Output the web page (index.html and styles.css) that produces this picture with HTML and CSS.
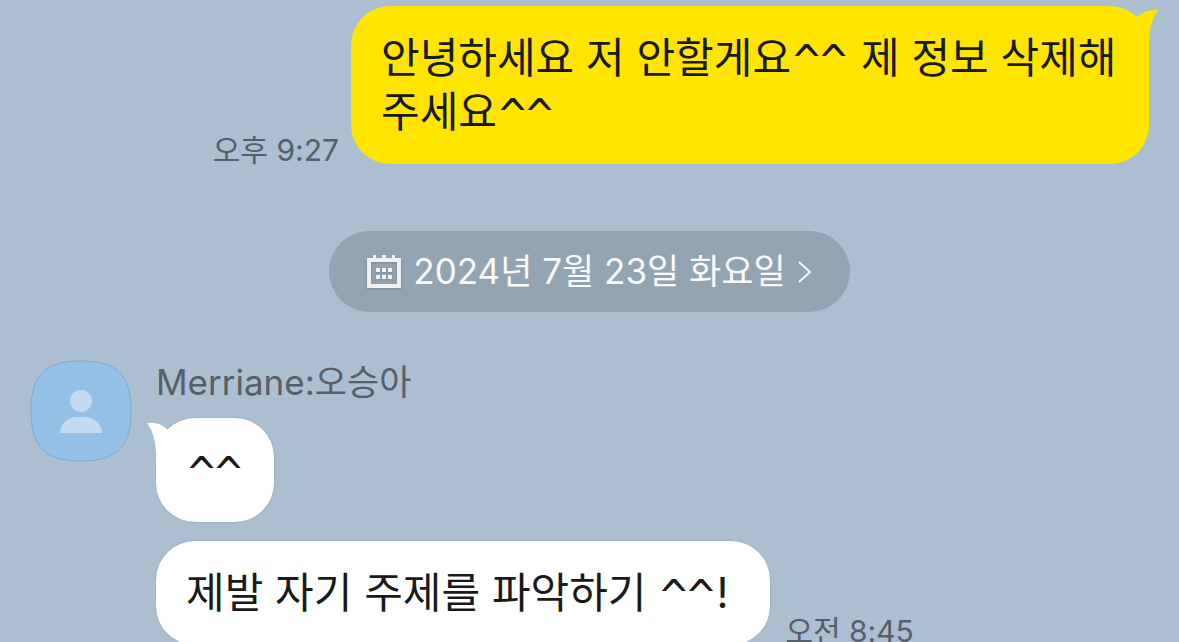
FILE: index.html
```html
<!DOCTYPE html>
<html lang="ko">
<head>
    <meta charset="UTF-8">
    <meta name="viewport" content="width=device-width, initial-scale=1.0">
    <title>채팅</title>
    <link rel="stylesheet" href="styles.css">
</head>
<body>
    <main class="chat">
        <div class="row mine">
            <time class="time">오후 9:27</time>
            <div class="bubble">
                안녕하세요 저 안할게요<span class="caret">^^</span> 제 정보 삭제해주세요<span class="caret">^^</span>
                <svg class="tail" viewBox="0 0 24 36" aria-hidden="true">
                    <path d="M0 14 L3 10 Q11 2 24 3 Q15 16 15 36 L0 36 Z"/>
                </svg>
            </div>
        </div>

        <button class="date" type="button">
            <svg class="calendar" viewBox="0 0 34 34" aria-hidden="true">
                <path fill-rule="evenodd" d="M0 3h6V0h3v3h6V0h4v3h6V0h3v3h6v30H0zM4 7v22h26V7z"/>
                <path d="M9 13h4v4H9zM15 13h4v4h-4zM21 13h4v4h-4zM9 20h4v4H9zM15 20h4v4h-4zM21 20h4v4h-4z"/>
            </svg>
            <span class="date-text">2024년 7월 23일 화요일</span>
            <svg class="arrow" viewBox="0 0 14 22" aria-hidden="true">
                <path d="M1 1L12 11L1 21"/>
            </svg>
        </button>

        <div class="group">
            <svg class="avatar" viewBox="0 0 102 102" aria-hidden="true">
                <path class="avatar-bg" d="M51 1C87 1 101 15 101 51S87 101 51 101S1 87 1 51S15 1 51 1Z"/>
                <circle cx="51" cy="41" r="11"/>
                <path d="M30 73C30 64 38 57 47 57h8C64 57 72 64 72 73Z"/>
            </svg>
            <div class="messages">
                <div class="name">Merriane:오승아</div>
                <div class="row">
                    <div class="bubble">
                        <span class="caret">^^</span>
                        <svg class="tail" viewBox="0 0 24 36" aria-hidden="true">
                            <path d="M24 14 L21 11 Q12 2 0 4 Q9 16 9 36 L24 36 Z"/>
                        </svg>
                    </div>
                </div>
                <div class="row">
                    <div class="bubble">제발 자기 주제를 파악하기 <span class="caret">^^</span>!&nbsp;</div>
                    <time class="time">오전 8:45</time>
                </div>
            </div>
        </div>
    </main>
</body>
</html>
```

FILE: styles.css
```css
body {
    margin: 0;
    height: 100vh;
    overflow: hidden;
    background-color: #abbfd0;
    font-family: Inter, "Noto Sans CJK KR", sans-serif;
}

.chat {
    display: flex;
    flex-direction: column;
    padding: 6px 30px 0;
}

.row {
    display: flex;
    align-items: flex-end;
    gap: 15px;
}

.mine {
    justify-content: flex-end;
    gap: 12px;
}

.bubble {
    position: relative;
    box-sizing: border-box;
    max-width: 798px;
    padding: 25px 30px;
    border-radius: 39px;
    background-color: #ffffff;
    box-shadow: 0 0 2px rgba(60, 90, 120, 0.3);
    color: #1a1a1a;
    font-size: 42px;
    line-height: 54px;
    word-break: break-all;
}

.mine .bubble {
    background-color: #ffe500;
    box-shadow: none;
}

/* 넓은 ^^ 모양 */
.caret {
    padding: 0 2px;
    font-family: "DejaVu Sans Mono", monospace;
    font-size: 45px;
    line-height: 1px;
    vertical-align: -3px;
}

/* 말풍선 꼬리 */
.tail {
    position: absolute;
    top: 1px;
    left: -9px;
    width: 24px;
    height: 36px;
    fill: #ffffff;
}

.mine .tail {
    left: auto;
    right: -9px;
    fill: #ffe500;
}

.time {
    color: #556068;
    font-size: 30px;
    line-height: 28px;
    white-space: nowrap;
}

.date {
    display: flex;
    align-items: center;
    align-self: center;
    gap: 12px;
    height: 81px;
    margin: 67px 0 48px;
    padding: 0 38px;
    border: 0;
    border-radius: 41px;
    background-color: #92a4b2;
    color: #f8fafc;
    font-family: inherit;
    font-size: 35px;
    white-space: nowrap;
    cursor: pointer;
}

.date-text {
    padding-bottom: 6px;
}

.calendar {
    width: 34px;
    height: 34px;
    fill: #f0f1f2;
    filter: drop-shadow(0 1px 1px rgba(0, 0, 0, 0.2));
}

.arrow {
    width: 14px;
    height: 22px;
    fill: none;
    stroke: #f8fafc;
    stroke-width: 2;
}

.group {
    display: flex;
    align-items: flex-start;
    gap: 24px;
}

.avatar {
    flex: none;
    width: 102px;
    height: 102px;
    fill: #c5daf1;
}

.avatar-bg {
    fill: #94bfe7;
    stroke: #82a9ce;
    stroke-width: 1;
}

.messages {
    display: flex;
    flex-direction: column;
    gap: 19px;
}

.name {
    height: 39px;
    color: #556068;
    font-size: 35px;
    line-height: 44px;
}
```
